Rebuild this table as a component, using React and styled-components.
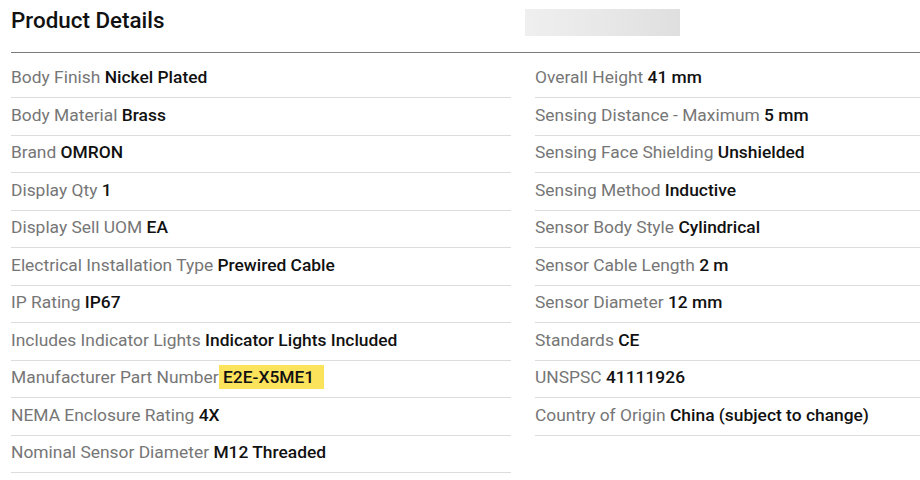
import styled, { createGlobalStyle } from "styled-components";

const GlobalStyle = createGlobalStyle`
  html, body {
    margin: 0;
    padding: 0;
    background: #fff;
    overflow: hidden;
  }
  body {
    font-family: Roboto, "Liberation Sans", sans-serif;
  }
`;

const leftSpecs = [
  ["Body Finish", "Nickel Plated"],
  ["Body Material", "Brass"],
  ["Brand", "OMRON"],
  ["Display Qty", "1"],
  ["Display Sell UOM", "EA"],
  ["Electrical Installation Type", "Prewired Cable"],
  ["IP Rating", "IP67"],
  ["Includes Indicator Lights", "Indicator Lights Included"],
  ["Manufacturer Part Number", "E2E-X5ME1", true],
  ["NEMA Enclosure Rating", "4X"],
  ["Nominal Sensor Diameter", "M12 Threaded"],
];

const rightSpecs = [
  ["Overall Height", "41 mm"],
  ["Sensing Distance - Maximum", "5 mm"],
  ["Sensing Face Shielding", "Unshielded"],
  ["Sensing Method", "Inductive"],
  ["Sensor Body Style", "Cylindrical"],
  ["Sensor Cable Length", "2 m"],
  ["Sensor Diameter", "12 mm"],
  ["Standards", "CE"],
  ["UNSPSC", "41111926"],
  ["Country of Origin", "China (subject to change)"],
];

const SpecRow = ({ label, value, highlight }) => (
  <Row>
    <Label>{label}</Label>
    {highlight ? (
      <Mark>
        {" "}
        {value}
      </Mark>
    ) : (
      <>
        {" "}
        <Value>{value}</Value>
      </>
    )}
  </Row>
);

const App = () => {
  return (
    <>
      <GlobalStyle />
      <Wrapper>
        <Header>
          <Title>Product Details</Title>
          <Skeleton />
        </Header>
        <Columns>
          <Column>
            {leftSpecs.map(([label, value, hl]) => (
              <SpecRow key={label} label={label} value={value} highlight={hl} />
            ))}
          </Column>
          <Column>
            {rightSpecs.map(([label, value]) => (
              <SpecRow key={label} label={label} value={value} />
            ))}
          </Column>
        </Columns>
      </Wrapper>
    </>
  );
};

export default App;

const Wrapper = styled.div`
  padding-left: 11px;
`;

const Header = styled.div`
  display: flex;
  align-items: flex-start;
  height: 52px;
  border-bottom: 1px solid #7a7a7a;
`;

const Title = styled.h2`
  margin: 7px 0 0;
  width: 514px;
  font-size: 22.4px;
  line-height: 26px;
  font-weight: 500;
  color: #111;
`;

const Skeleton = styled.div`
  margin-top: 9px;
  width: 155px;
  height: 27px;
  background: linear-gradient(90deg, #efefef 0%, #e8e8e8 50%, #dfdfdf 100%);
`;

const Columns = styled.div`
  display: grid;
  grid-template-columns: 500px 1fr;
  column-gap: 24px;
  margin-top: 7.5px;
`;

const Column = styled.div`
  display: flex;
  flex-direction: column;
`;

const Row = styled.div`
  padding: 7.5px 0 10px;
  line-height: 19px;
  font-size: 17.4px;
  border-bottom: 1px solid #dcdcdc;
  white-space: pre;
`;

const Label = styled.span`
  color: #767676;
`;

const Value = styled.span`
  color: #111;
  font-weight: 500;
`;

const Mark = styled.span`
  background: #fce35c;
  color: #111;
  font-weight: 500;
  padding: 2px 10px 2px 0;
`;
